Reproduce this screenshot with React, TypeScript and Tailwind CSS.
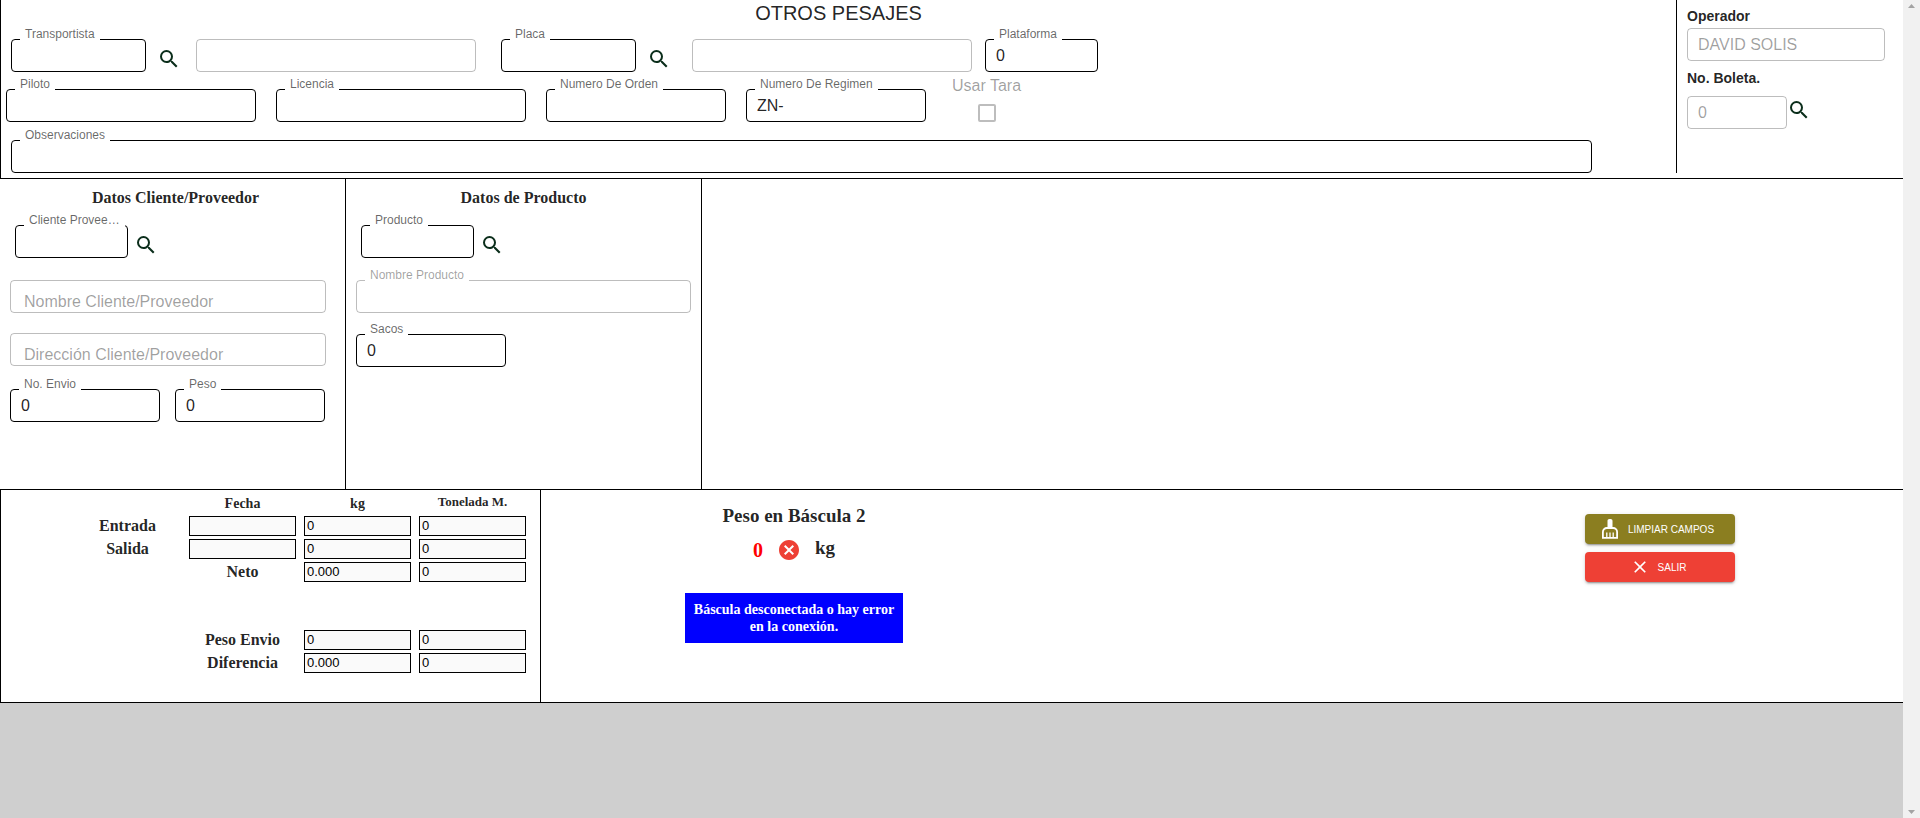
import { useId, type ReactNode } from "react";
import { MdCancel, MdClear, MdSearch } from "react-icons/md";

type FieldProps = {
  label?: string;
  name: string;
  value?: string;
  width: string;
  disabled?: boolean;
};

function Field({ label, name, value = "", width, disabled = false }: FieldProps) {
  const id = useId();
  return (
    <div className={`relative h-[33px] shrink-0 ${width}`}>
      <input
        id={id}
        aria-label={label ? undefined : name}
        defaultValue={value}
        disabled={disabled}
        className="h-full w-full rounded-[4px] border border-black bg-transparent px-2.5 text-base text-black/87 outline-none disabled:border-black/26 disabled:text-black/38"
      />
      {label && (
        <label
          htmlFor={id}
          className={`absolute -top-3 left-[9px] bg-white px-[5px] text-xs leading-[14px] whitespace-nowrap ${
            disabled ? "text-black/38" : "text-black/60"
          }`}
        >
          {label}
        </label>
      )}
    </div>
  );
}

function RestingField({ label }: { label: string }) {
  return (
    <input
      aria-label={label}
      placeholder={label}
      disabled
      className="h-[33px] w-[316px] rounded-[4px] border border-black/26 bg-transparent px-[13px] pt-2.5 text-base leading-5 placeholder:text-black/38"
    />
  );
}

function SearchButton({ label }: { label: string }) {
  return (
    <button type="button" aria-label={label} className="shrink-0 text-[#0b2e1b]">
      <MdSearch size={24} />
    </button>
  );
}

function BroomIcon() {
  return (
    <svg
      aria-hidden="true"
      width="16"
      height="20"
      viewBox="0 0 16 20"
      fill="none"
      stroke="currentColor"
      className="shrink-0"
    >
      <rect x="5.5" y="0" width="5" height="10" rx="1.8" fill="currentColor" stroke="none" />
      <path d="M.9 18.9V13a4 4 0 0 1 4-4h6.2a4 4 0 0 1 4 4v5.900z" strokeWidth="1.8" />
      <path d="M4.800 13.500v5M8 13.500v5M11.200 13.500v5" strokeWidth="1.300" />
    </svg>
  );
}

function WeightInput({ label, value = "" }: { label: string; value?: string }) {
  return (
    <input
      aria-label={label}
      defaultValue={value}
      disabled
      className="block h-5 w-[107px] border border-black bg-[#fafafa] px-0.5 text-[13px] leading-4 text-black"
    />
  );
}

function WeightRow({ title, kg, tons }: { title: string; kg: string; tons: string }) {
  return (
    <tr className="h-[23px]">
      <td />
      <th scope="row" className="p-0 text-center text-base leading-5">
        {title}
      </th>
      <td className="p-0 pl-1">
        <WeightInput label={`${title} kg`} value={kg} />
      </td>
      <td className="p-0 pl-1">
        <WeightInput label={`${title} toneladas`} value={tons} />
      </td>
    </tr>
  );
}

function DatedRow({ title }: { title: string }) {
  return (
    <tr className="h-[23px]">
      <th scope="row" className="p-0 text-center text-base leading-5">
        {title}
      </th>
      <td className="p-0 pl-1">
        <WeightInput label={`${title} fecha`} />
      </td>
      <td className="p-0 pl-1">
        <WeightInput label={`${title} kg`} value="0" />
      </td>
      <td className="p-0 pl-1">
        <WeightInput label={`${title} toneladas`} value="0" />
      </td>
    </tr>
  );
}

function ActionButton({ color, children }: { color: string; children: ReactNode }) {
  return (
    <button
      type="button"
      className={`flex h-[30px] w-[150px] items-center justify-center rounded-[4px] pr-1 text-[10px] text-white shadow-[0_3px_1px_-2px_rgba(0,0,0,0.2),0_2px_2px_0_rgba(0,0,0,0.14),0_1px_5px_0_rgba(0,0,0,0.12)] ${color}`}
    >
      {children}
    </button>
  );
}

export default function App() {
  return (
    <div className="flex min-h-screen bg-[#cfcfcf] font-['Liberation_Sans',Arial,sans-serif] text-black/87">
      <main className="min-w-0 flex-1">
        <section className="flex border-b border-l border-black bg-white pb-[5px]">
          <div className="min-w-0 flex-1">
            <h1 className="pt-px text-center text-xl leading-6">OTROS PESAJES</h1>
            <div className="mt-3.5 flex items-start pl-2.5">
              <Field label="Transportista" name="transportista" width="w-[135px]" />
              <div className="mt-2 ml-[11px] flex">
                <SearchButton label="Buscar transportista" />
              </div>
              <div className="ml-[15px]">
                <Field name="Nombre transportista" width="w-[280px]" disabled />
              </div>
              <div className="ml-[25px]">
                <Field label="Placa" name="placa" width="w-[135px]" />
              </div>
              <div className="mt-2 ml-[11px] flex">
                <SearchButton label="Buscar placa" />
              </div>
              <div className="ml-[21px]">
                <Field name="Descripción placa" width="w-[280px]" disabled />
              </div>
              <div className="ml-[13px]">
                <Field label="Plataforma" name="plataforma" value="0" width="w-[113px]" />
              </div>
            </div>
            <div className="mt-1 flex items-end gap-5 pl-[5px]">
              <Field label="Piloto" name="piloto" width="w-[250px]" />
              <Field label="Licencia" name="licencia" width="w-[250px]" />
              <Field label="Numero De Orden" name="orden" width="w-[180px]" />
              <Field label="Numero De Regimen" name="regimen" value="ZN-" width="w-[180px]" />
              <label className="ml-1.5 flex flex-col items-center gap-2 text-base leading-5 text-black/38">
                Usar Tara
                <input
                  type="checkbox"
                  disabled
                  className="size-[18px] appearance-none rounded-[2px] border-2 border-black/26"
                />
              </label>
            </div>
            <div className="mt-[18px] pr-[84px] pl-2.5">
              <Field label="Observaciones" name="observaciones" width="w-full" />
            </div>
          </div>
          <aside className="w-[227px] shrink-0 border-l border-black pt-2 pl-2.5">
            <h2 className="text-sm leading-4 font-bold">Operador</h2>
            <div className="mt-1">
              <Field name="Operador" value="DAVID SOLIS" width="w-[198px]" disabled />
            </div>
            <h2 className="mt-[9px] text-sm leading-4 font-bold">No. Boleta.</h2>
            <div className="mt-2.5 flex items-start">
              <Field name="No. Boleta" value="0" width="w-[100px]" disabled />
              <div className="mt-0.5 flex">
                <SearchButton label="Buscar boleta" />
              </div>
            </div>
          </aside>
        </section>

        <section className="flex min-h-[310px] bg-white">
          <div className="w-[346px] shrink-0 border-r border-black pt-[9px]">
            <h2 className="pl-1.5 text-center font-['Liberation_Serif',serif] text-base leading-5 font-bold">
              Datos Cliente/Proveedor
            </h2>
            <div className="mt-[17px] flex items-start pl-[15px]">
              <Field label="Cliente Provee…" name="cliente" width="w-[113px]" />
              <div className="mt-2 ml-1.5 flex">
                <SearchButton label="Buscar cliente" />
              </div>
            </div>
            <div className="mt-[22px] flex flex-col gap-5 pl-2.5">
              <RestingField label="Nombre Cliente/Proveedor" />
              <RestingField label="Dirección Cliente/Proveedor" />
            </div>
            <div className="mt-[23px] flex gap-[15px] pl-2.5">
              <Field label="No. Envio" name="envio" value="0" width="w-[150px]" />
              <Field label="Peso" name="peso" value="0" width="w-[150px]" />
            </div>
          </div>
          <div className="w-[356px] shrink-0 border-r border-black pt-[9px]">
            <h2 className="text-center font-['Liberation_Serif',serif] text-base leading-5 font-bold">
              Datos de Producto
            </h2>
            <div className="mt-[17px] flex items-start pl-[15px]">
              <Field label="Producto" name="producto" width="w-[113px]" />
              <div className="mt-2 ml-1.5 flex">
                <SearchButton label="Buscar producto" />
              </div>
            </div>
            <div className="mt-[22px] flex flex-col gap-[21px] pl-2.5">
              <Field label="Nombre Producto" name="nombre-producto" width="w-[335px]" disabled />
              <Field label="Sacos" name="sacos" value="0" width="w-[150px]" />
            </div>
          </div>
        </section>

        <section className="flex min-h-[214px] border-y border-l border-black bg-white">
          <div className="w-[540px] shrink-0 border-r border-black pt-1 pl-[69px]">
            <table className="w-[460px] table-fixed border-collapse font-['Liberation_Serif',serif] [&_input]:font-['Liberation_Sans',Arial,sans-serif]">
              <thead>
                <tr className="h-5 align-top">
                  <td />
                  <th scope="col" className="p-0 text-sm leading-5">Fecha</th>
                  <th scope="col" className="p-0 text-sm leading-5">kg</th>
                  <th scope="col" className="p-0 text-[13px] leading-4">Tonelada M.</th>
                </tr>
              </thead>
              <tbody>
                <DatedRow title="Entrada" />
                <DatedRow title="Salida" />
                <WeightRow title="Neto" kg="0.000" tons="0" />
              </tbody>
              <tbody>
                <tr className="h-[45px]">
                  <td colSpan={4} />
                </tr>
                <WeightRow title="Peso Envio" kg="0" tons="0" />
                <WeightRow title="Diferencia" kg="0.000" tons="0" />
              </tbody>
            </table>
          </div>
          <div className="ml-36 flex w-[218px] shrink-0 flex-col items-center pt-4 font-['Liberation_Serif',serif] font-bold">
            <h2 className="text-[19px] leading-5">Peso en Báscula 2</h2>
            <div className="mt-3 flex items-center">
              <output className="text-xl leading-6 text-[#ff0000]">0</output>
              <MdCancel size={24} className="ml-3.5 text-[#ee4035]" />
              <span className="mb-1 ml-3.5 text-[19px] leading-5">kg</span>
            </div>
            <p
              role="alert"
              className="mt-[31px] flex h-[50px] w-full items-center justify-center bg-[#0000ff] px-1 text-center text-sm leading-[17px] text-white"
            >
              Báscula desconectada o hay error en la conexión.
            </p>
          </div>
          <div className="mr-[168px] ml-auto flex flex-col gap-2 pt-6">
            <ActionButton color="bg-[#8b7e20]">
              <span className="mr-2.5">
                <BroomIcon />
              </span>
              LIMPIAR CAMPOS
            </ActionButton>
            <ActionButton color="bg-[#ee4035]">
              <span className="mr-2">
                <MdClear size={20} />
              </span>
              SALIR
            </ActionButton>
          </div>
        </section>
      </main>

      <div
        aria-hidden="true"
        className="sticky top-0 flex h-screen w-[17px] shrink-0 flex-col items-center justify-between bg-[#f1f1f1] py-1"
      >
        <svg width="7" height="4" viewBox="0 0 7 4" fill="#a3a3a3">
          <path d="M0 4 3.5 0 7 4z" />
        </svg>
        <svg width="7" height="4" viewBox="0 0 7 4" fill="#a3a3a3">
          <path d="M0 0h7L3.5 4z" />
        </svg>
      </div>
    </div>
  );
}
